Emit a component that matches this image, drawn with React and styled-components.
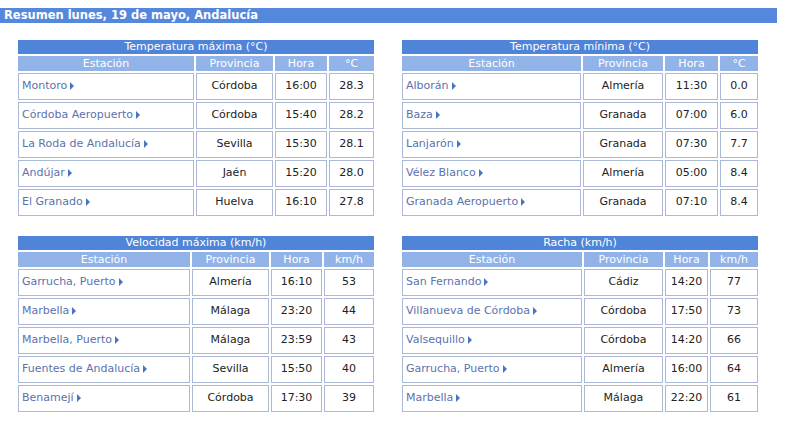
import React from 'react';
import styled, { createGlobalStyle } from 'styled-components';

const GlobalStyle = createGlobalStyle`
	html, body {
		margin: 0;
		padding: 0;
		background: #ffffff;
	}

	body {
		font-family: 'DejaVu Sans', Verdana, sans-serif;
		font-size: 11px;
		color: #222222;
	}
`;

const tables = [
	{
		title: 'Temperatura máxima (°C)',
		unit: '°C',
		columns: '176px 77px 52px 45px',
		rows: [
			['Montoro', 'Córdoba', '16:00', '28.3'],
			['Córdoba Aeropuerto', 'Córdoba', '15:40', '28.2'],
			['La Roda de Andalucía', 'Sevilla', '15:30', '28.1'],
			['Andújar', 'Jaén', '15:20', '28.0'],
			['El Granado', 'Huelva', '16:10', '27.8'],
		],
	},
	{
		title: 'Temperatura mínima (°C)',
		unit: '°C',
		columns: '179px 80px 53px 38px',
		rows: [
			['Alborán', 'Almería', '11:30', '0.0'],
			['Baza', 'Granada', '07:00', '6.0'],
			['Lanjarón', 'Granada', '07:30', '7.7'],
			['Vélez Blanco', 'Almería', '05:00', '8.4'],
			['Granada Aeropuerto', 'Granada', '07:10', '8.4'],
		],
	},
	{
		title: 'Velocidad máxima (km/h)',
		unit: 'km/h',
		columns: '172px 77px 51px 50px',
		rows: [
			['Garrucha, Puerto', 'Almería', '16:10', '53'],
			['Marbella', 'Málaga', '23:20', '44'],
			['Marbella, Puerto', 'Málaga', '23:59', '43'],
			['Fuentes de Andalucía', 'Sevilla', '15:50', '40'],
			['Benamejí', 'Córdoba', '17:30', '39'],
		],
	},
	{
		title: 'Racha (km/h)',
		unit: 'km/h',
		columns: '180px 79px 43px 48px',
		rows: [
			['San Fernando', 'Cádiz', '14:20', '77'],
			['Villanueva de Córdoba', 'Córdoba', '17:50', '73'],
			['Valsequillo', 'Córdoba', '14:20', '66'],
			['Garrucha, Puerto', 'Almería', '16:00', '64'],
			['Marbella', 'Málaga', '22:20', '61'],
		],
	},
];

const Page = styled.div`
	padding-top: 8px;
	width: 777px;
`;

const TopBar = styled.div`
	background-color: #5588dd;
	color: #ffffff;
	font-weight: bold;
	font-size: 11.5px;
	line-height: 15px;
	height: 15px;
	padding-left: 4px;
	white-space: nowrap;
`;

const Board = styled.div`
	display: grid;
	grid-template-columns: 356px 356px;
	column-gap: 28px;
	row-gap: 20px;
	padding: 17px 18px 0 18px;
`;

const Panel = styled.div`
	display: grid;
	grid-template-columns: ${props => props.columns};
	grid-template-rows: 14px 15px;
	grid-auto-rows: 27px;
	gap: 2px;
`;

const PanelTitle = styled.div`
	grid-column: 1 / -1;
	background-color: #4f84d8;
	color: #ffffff;
	text-align: center;
	line-height: 14px;
`;

const HeadCell = styled.div`
	background-color: #92b3e8;
	color: #ffffff;
	text-align: center;
	line-height: 15px;
`;

const Cell = styled.div`
	border: 1px solid #a9b9d6;
	padding: 5px 3px 0 3px;
	line-height: 13px;
	text-align: ${props => props.align || 'center'};
	white-space: nowrap;
	overflow: hidden;
	color: #222222;
`;

const StationLink = styled.a`
	color: #5b72ae;
	text-decoration: none;
	cursor: pointer;
`;

const Arrow = styled.span`
	display: inline-block;
	width: 0;
	height: 0;
	margin-left: 3px;
	border-top: 4px solid transparent;
	border-bottom: 4px solid transparent;
	border-left: 4px solid #4a73c6;
	vertical-align: -1px;
`;

const SummaryTable = ({ title, unit, columns, rows }) => (
	<Panel columns={columns}>
		<PanelTitle>{title}</PanelTitle>
		<HeadCell>Estación</HeadCell>
		<HeadCell>Provincia</HeadCell>
		<HeadCell>Hora</HeadCell>
		<HeadCell>{unit}</HeadCell>
		{rows.map(([station, province, time, value]) => (
			<React.Fragment key={station + time}>
				<Cell align="left">
					<StationLink>{station}</StationLink>
					<Arrow />
				</Cell>
				<Cell>{province}</Cell>
				<Cell>{time}</Cell>
				<Cell>{value}</Cell>
			</React.Fragment>
		))}
	</Panel>
);

const App = () => (
	<>
		<GlobalStyle />
		<Page>
			<TopBar>Resumen lunes, 19 de mayo, Andalucía</TopBar>
			<Board>
				{tables.map(table => (
					<SummaryTable key={table.title} {...table} />
				))}
			</Board>
		</Page>
	</>
);

export default App;
